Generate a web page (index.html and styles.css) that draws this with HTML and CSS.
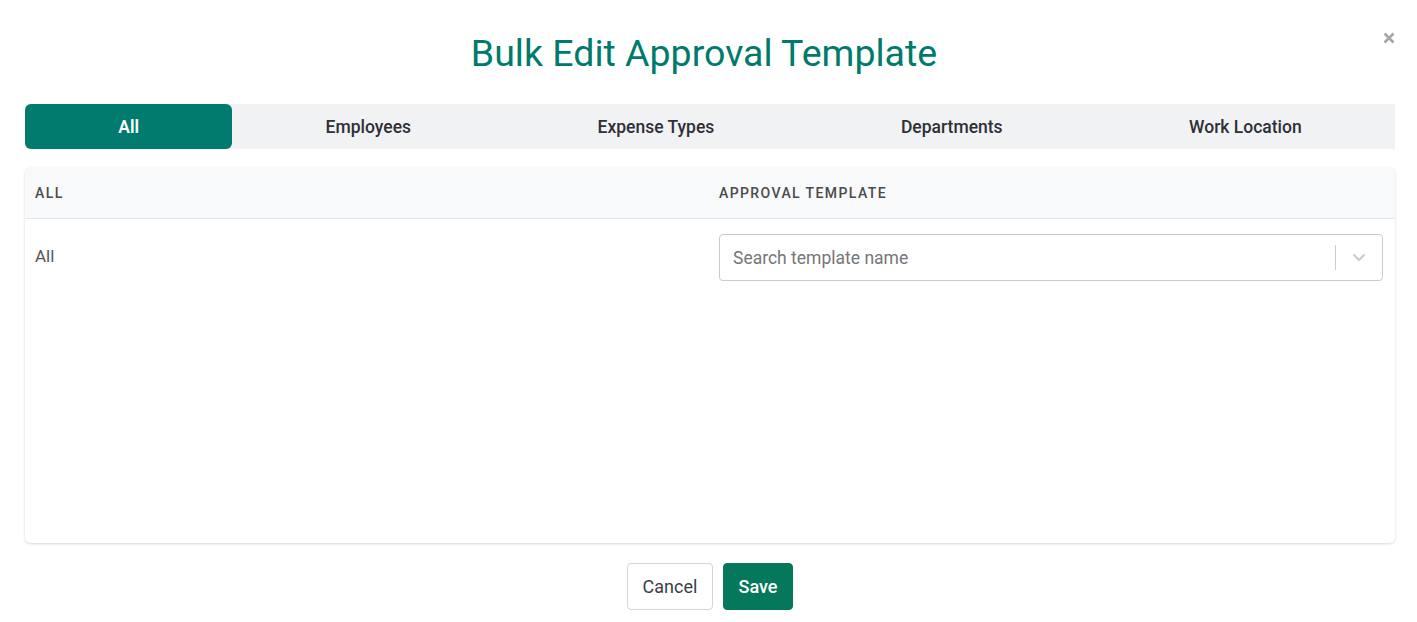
FILE: index.html
```html
<!DOCTYPE html>
<html lang="en">
<head>
<meta charset="utf-8">
<title>Bulk Edit Approval Template</title>
<link rel="stylesheet" href="styles.css">
</head>
<body>
<div class="modal">
  <button class="close" aria-label="Close">
    <svg width="12" height="12" viewBox="0 0 12 12"><path d="M1.5 1.5 L10.5 10.5 M10.5 1.5 L1.5 10.5" stroke="#a6a6a6" stroke-width="2.6" stroke-linecap="butt"/></svg>
  </button>
  <h1 class="title">Bulk Edit Approval Template</h1>
  <div class="tabs">
    <div class="tab active">All</div>
    <div class="tab">Employees</div>
    <div class="tab">Expense Types</div>
    <div class="tab">Departments</div>
    <div class="tab">Work Location</div>
  </div>
  <div class="card">
    <div class="card-head">
      <div class="cell">All</div>
      <div class="cell">Approval Template</div>
    </div>
    <div class="card-row">
      <div class="cell row-label">All</div>
      <div class="cell">
        <div class="select">
          <span class="placeholder">Search template name</span>
          <span class="sep"></span>
          <span class="chev">
            <svg width="14" height="9" viewBox="0 0 14 9"><path d="M1.5 1.5 L7 7 L12.5 1.5" fill="none" stroke="#cccccc" stroke-width="2.2"/></svg>
          </span>
        </div>
      </div>
    </div>
  </div>
  <div class="actions">
    <button class="btn cancel">Cancel</button>
    <button class="btn save">Save</button>
  </div>
</div>
</body>
</html>
```
FILE: styles.css
```css
* { box-sizing: border-box; }
html, body { margin: 0; padding: 0; background: #fff; }
body { font-family: Roboto, "Liberation Sans", Arial, sans-serif; color: #333; }

.modal { position: relative; padding: 0 22px 0 25px; }

.close {
  position: absolute; top: 32px; right: 22px;
  border: 0; background: none; padding: 0; cursor: pointer; line-height: 0;
}

.title {
  margin: 0; padding: 31px 12px 0 0;
  font-size: 37.5px; font-weight: 400; line-height: 44px;
  color: #007a6c; text-align: center;
}

.tabs {
  margin-top: 29px;
  display: flex; height: 45px;
  background: #f1f2f4;
}
.tab {
  flex: 1 1 auto;
  display: flex; align-items: center; justify-content: center;
  font-size: 17.5px; font-weight: 500; color: #2f2f38;
}
.tab.active {
  background: #007b6e; color: #fff; font-weight: 600;
  border-radius: 6px;
}

.card {
  margin-top: 18px; height: 376px;
  border-radius: 6px; background: #fff;
  box-shadow: 0 1px 3px rgba(0,0,0,0.16);
  overflow: hidden;
}
.card-head {
  display: grid; grid-template-columns: 684px 1fr;
  height: 52px; background: #f8f9fa;
  border-bottom: 1px solid #e4e6e9;
  align-items: center;
}
.card-head .cell {
  padding: 0 10px;
  font-size: 14px; font-weight: 500; letter-spacing: 1.4px;
  text-transform: uppercase; color: #4a4a4a;
}
.card-row {
  display: grid; grid-template-columns: 684px 1fr;
  padding-top: 15px;
}
.card-row .cell { padding: 0 12px 0 10px; }
.row-label { font-size: 17px; color: #555; padding-top: 12px !important; }

.select {
  display: flex; align-items: center;
  height: 47px; border: 1px solid #cbcbcb; border-radius: 4px;
  padding-left: 13px;
}
.placeholder { flex: 1; font-size: 17.5px; color: #767676; }
.sep { width: 1px; height: 25px; background: #cccccc; }
.chev { width: 46px; display: flex; justify-content: center; align-items: center; line-height: 0; }

.actions {
  display: flex; justify-content: center; gap: 10px;
  margin-top: 20px;
}
.btn {
  height: 47px; border-radius: 4px; font-family: inherit;
  font-size: 18px; cursor: pointer; padding: 0;
}
.cancel { width: 86px; background: #fff; border: 1px solid #d3d5dc; color: #3a3d4a; }
.save { width: 70px; background: #05775a; border: 1px solid #05775a; color: #fff; font-weight: 500; }
```
